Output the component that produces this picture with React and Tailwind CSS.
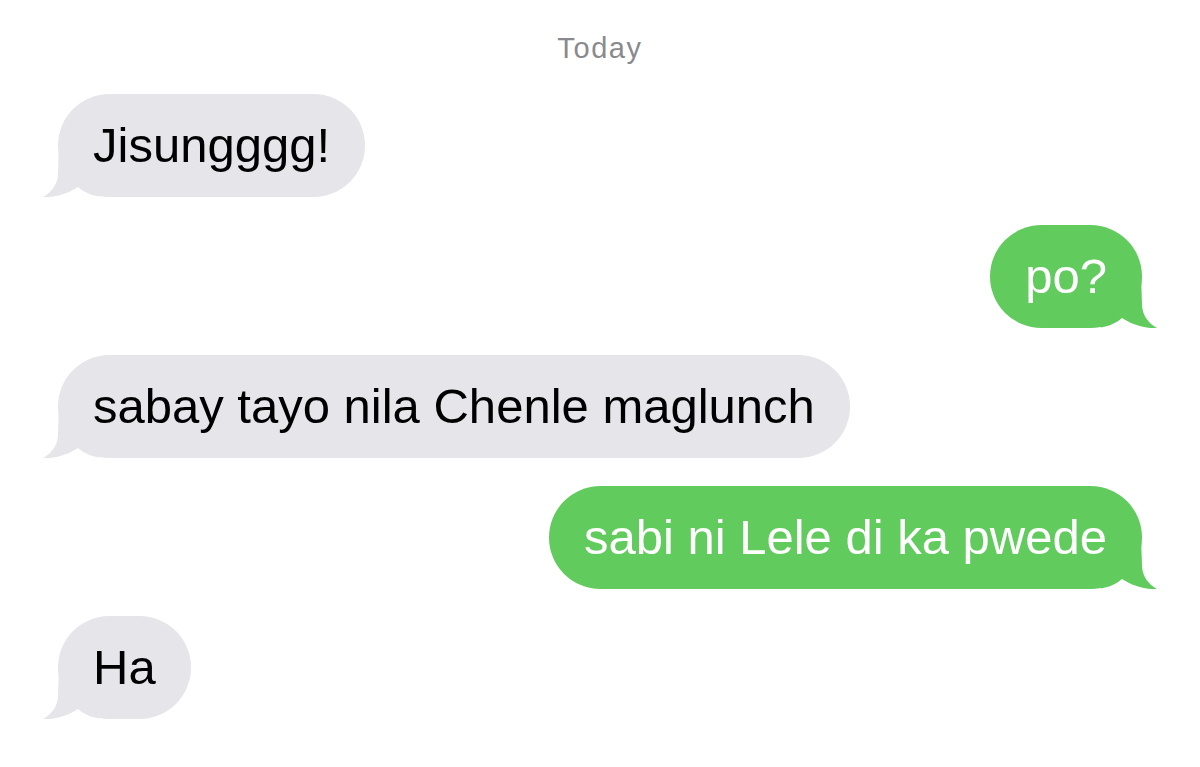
import React from 'react';

const messages = [
  { id: 1, text: 'Jisungggg!', mine: false },
  { id: 2, text: 'po?', mine: true },
  { id: 3, text: 'sabay tayo nila Chenle maglunch', mine: false },
  { id: 4, text: 'sabi ni Lele di ka pwede', mine: true },
  { id: 5, text: 'Ha', mine: false },
];

const Tail = ({ mine }) => (
  <svg
    width="60"
    height="60"
    viewBox="0 0 60 60"
    className={
      mine
        ? 'absolute -right-[15px] bottom-0 -scale-x-100 fill-[#62cb5d]'
        : 'absolute -left-[15px] bottom-0 fill-[#e5e5ea]'
    }
  >
    <path d="M16 8 L15 36 C15 47 9 55 0 60 C12 61 26 56 35 50 C41 55 47 58 56 59.5 L56 8 Z" />
  </svg>
);

const Bubble = ({ text, mine }) => (
  <div className={mine ? 'flex justify-end' : 'flex justify-start'}>
    <div
      className={
        mine
          ? 'relative h-[103px] px-[35px] flex items-center rounded-full bg-[#62cb5d] text-white'
          : 'relative h-[103px] px-[35px] flex items-center rounded-full bg-[#e5e5ea] text-black'
      }
    >
      <Tail mine={mine} />
      <span className="relative whitespace-nowrap text-[49px] leading-none">{text}</span>
    </div>
  </div>
);

export default function App() {
  return (
    <div className="min-h-screen bg-white px-[58px] font-['Liberation_Sans',Arial,sans-serif]">
      <div className="pt-[33px] text-center text-[29px] leading-[30px] tracking-[1.6px] text-[#8a8a8e]">
        Today
      </div>
      <div className="mt-[31px] flex flex-col gap-[27.5px]">
        {messages.map((m) => (
          <Bubble key={m.id} text={m.text} mine={m.mine} />
        ))}
      </div>
    </div>
  );
}
